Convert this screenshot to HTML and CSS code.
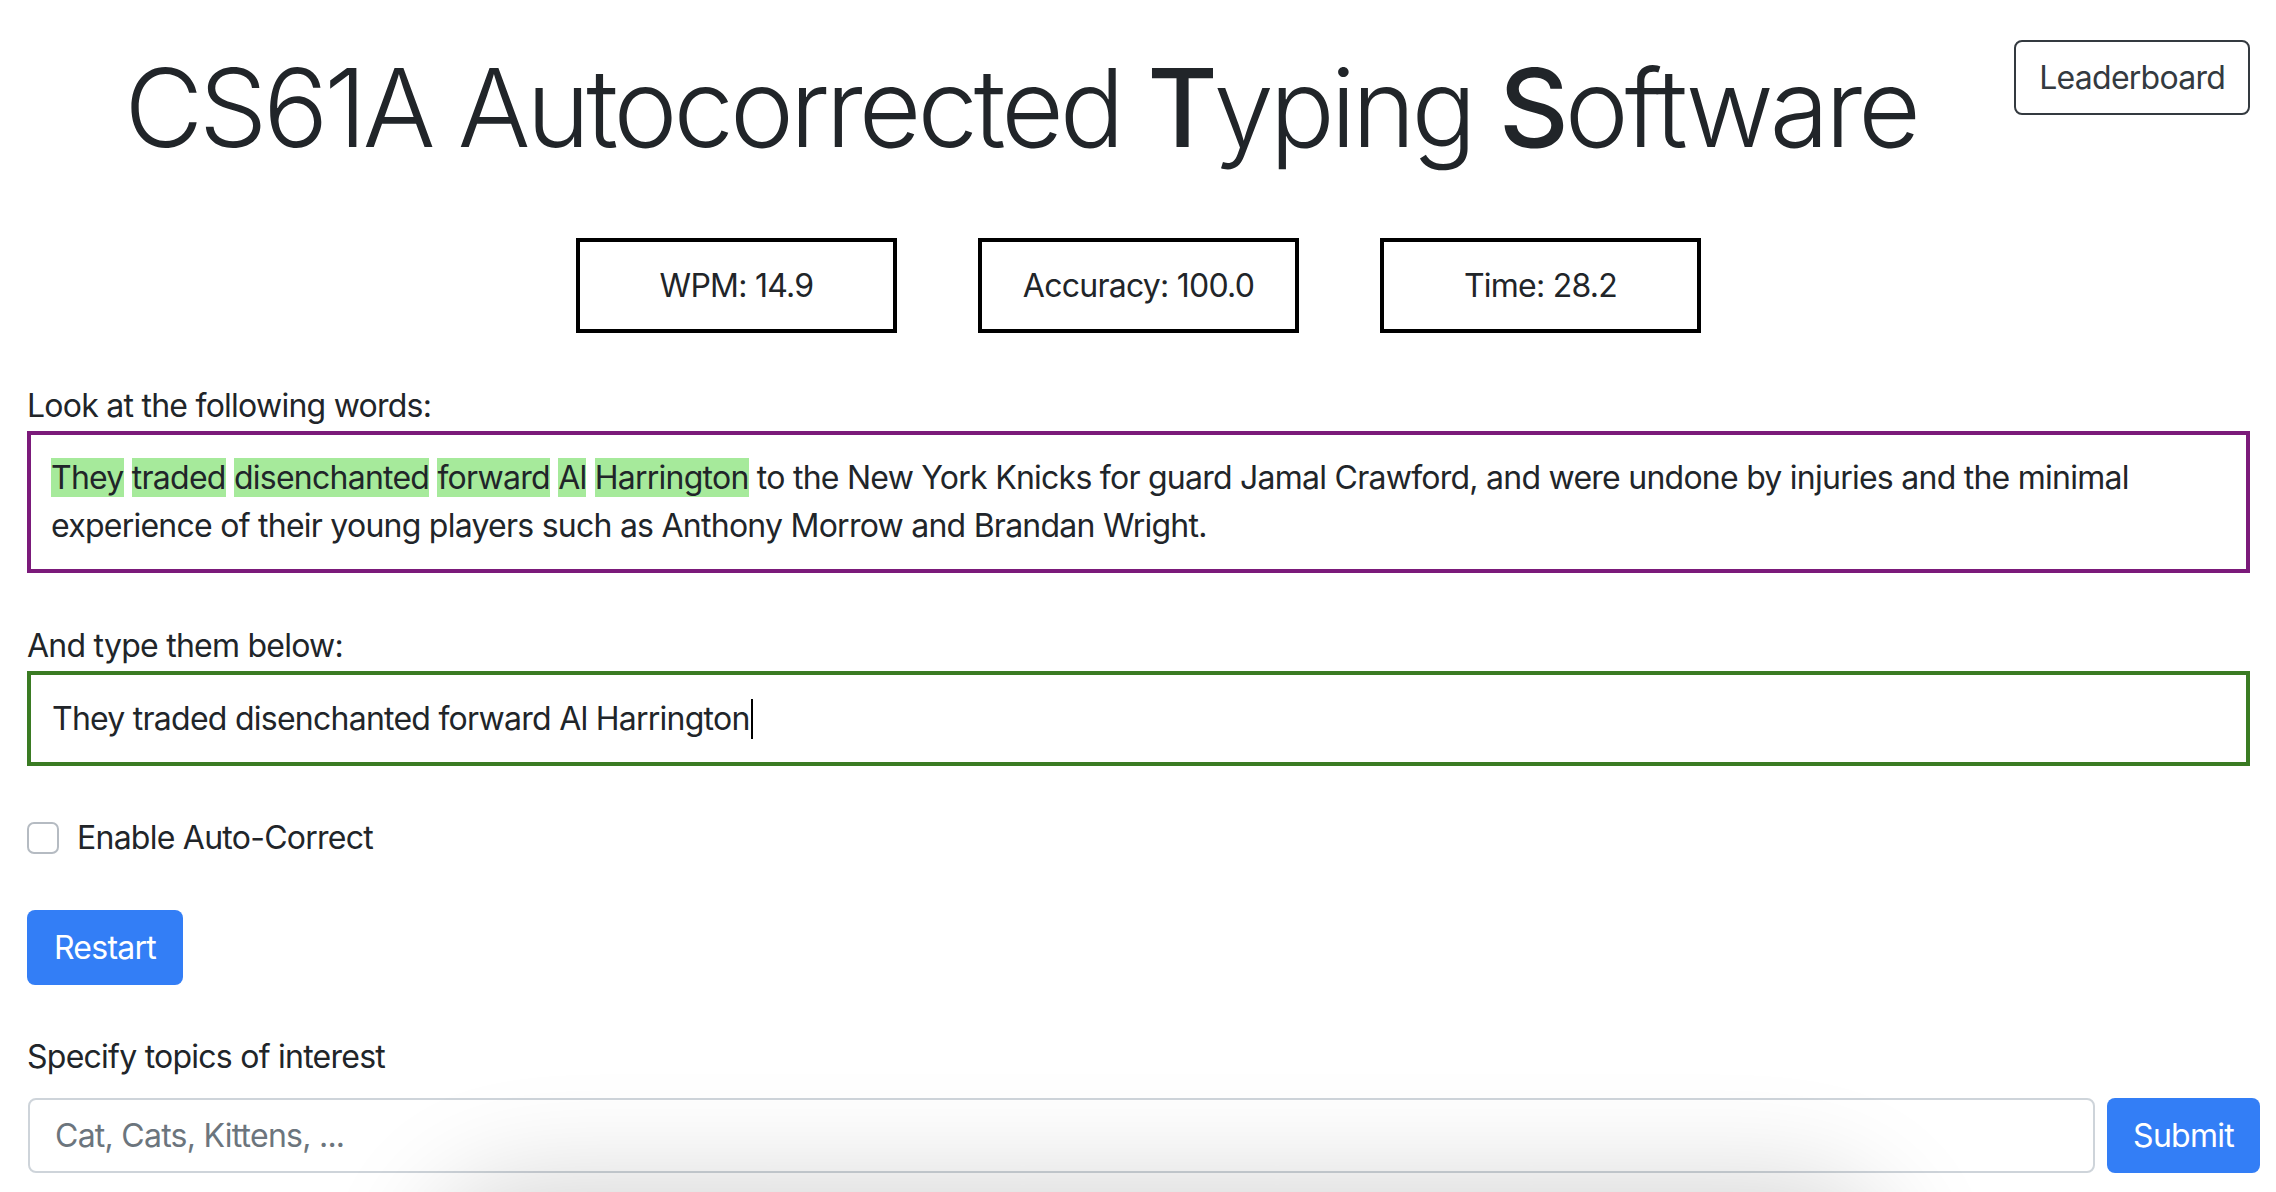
FILE: index.html
```html
<!DOCTYPE html>
<html lang="en">
<head>
<meta charset="utf-8">
<title>CS61A Autocorrected Typing Software</title>
<link rel="stylesheet" href="styles.css">
</head>
<body>
<div class="page">
  <header class="header">
    <h1 class="title">CS61A Autocorrected <b>T</b>yping <b>S</b>oftware</h1>
    <button class="btn-outline">Leaderboard</button>
  </header>

  <div class="stats">
    <div class="stat">WPM: 14.9</div>
    <div class="stat">Accuracy: 100.0</div>
    <div class="stat">Time: 28.2</div>
  </div>

  <div class="label label-look">Look at the following words:</div>
  <div class="words"><span class="ok">They</span> <span class="ok">traded</span> <span class="ok">disenchanted</span> <span class="ok">forward</span> <span class="ok">Al</span> <span class="ok">Harrington</span> to the New York Knicks for guard Jamal Crawford, and were undone by injuries and the minimal experience of their young players such as Anthony Morrow and Brandan Wright.</div>

  <div class="label label-type">And type them below:</div>
  <div class="typed" role="textbox">They traded disenchanted forward Al Harrington<span class="caret"></span></div>

  <label class="check">
    <span class="checkbox"></span>
    <span>Enable Auto-Correct</span>
  </label>

  <button class="btn-primary restart">Restart</button>

  <div class="label label-topics">Specify topics of interest</div>
  <div class="topics">
    <input class="topics-input" type="text" placeholder="Cat, Cats, Kittens, ...">
    <button class="btn-primary submit">Submit</button>
  </div>
</div>
<div class="bottom-shadow"></div>
</body>
</html>
```

FILE: styles.css
```css
html, body {
  margin: 0;
  padding: 0;
  background: #fff;
  overflow: hidden;
}

body {
  font-family: Inter, "Noto Sans", "Liberation Sans", sans-serif;
  font-size: 32px;
  line-height: 48px;
  letter-spacing: -0.75px;
  color: #212529;
}

.page {
  padding: 0 26px 0 27px;
}

.header {
  display: flex;
  align-items: flex-start;
  padding-top: 40px;
}

.title {
  flex: 1;
  margin: 1px 0 0;
  text-align: center;
  font-size: 108px;
  line-height: 134px;
  font-weight: 300;
  letter-spacing: -4px;
}

.title b {
  font-weight: 500;
}

button {
  font-family: inherit;
  letter-spacing: inherit;
  cursor: pointer;
}

.btn-outline {
  height: 75px;
  padding: 0 23px;
  font-size: 32px;
  color: #343a40;
  background: #fff;
  border: 2px solid #343a40;
  border-radius: 8px;
}

.stats {
  display: flex;
  justify-content: center;
  gap: 81px;
  margin-top: 63px;
}

.stat {
  box-sizing: border-box;
  width: 321px;
  height: 95px;
  border: 4px solid #000;
  display: flex;
  align-items: center;
  justify-content: center;
}

.label-look {
  margin-top: 49px;
}

.words {
  margin-top: 1px;
  border: 4px solid #7b1a7a;
  padding: 19px 20px;
}

.ok {
  background: #a6ea9b;
}

.label-type {
  margin-top: 49px;
}

.typed {
  box-sizing: border-box;
  margin-top: 1px;
  height: 95px;
  border: 4px solid #3a7b23;
  padding: 0 21px;
  display: flex;
  align-items: center;
}

.caret {
  display: inline-block;
  width: 2px;
  height: 40px;
  background: #000;
  margin-left: 1px;
}

.check {
  display: flex;
  align-items: center;
  gap: 18px;
  margin-top: 48px;
  height: 48px;
}

.checkbox {
  box-sizing: border-box;
  width: 32px;
  height: 32px;
  border: 2px solid #b5bbc2;
  border-radius: 7px;
  background: #fff;
}

.btn-primary {
  height: 75px;
  padding: 0 24px;
  font-size: 32px;
  color: #fff;
  background: #337ef6;
  border: none;
  border-radius: 8px;
}

.restart {
  display: block;
  margin-top: 48px;
  width: 156px;
  padding: 0;
}

.label-topics {
  margin-top: 48px;
}

.topics {
  display: flex;
  gap: 12px;
  margin: 17px -10px 0 1px;
}

.topics-input {
  flex: 1;
  box-sizing: border-box;
  height: 75px;
  padding: 0 25px;
  font-family: inherit;
  font-size: 32px;
  letter-spacing: inherit;
  color: #212529;
  border: 2px solid #ced4da;
  border-radius: 8px;
  background: transparent;
  outline: none;
}

.topics-input::placeholder {
  color: #6c757d;
}

.submit {
  width: 153px;
  padding: 0;
}

.bottom-shadow {
  position: fixed;
  left: 470px;
  width: 1380px;
  top: 1225px;
  height: 120px;
  border-radius: 60px;
  box-shadow: 0 0 110px 45px rgba(0, 0, 0, 0.17);
  pointer-events: none;
}
```
